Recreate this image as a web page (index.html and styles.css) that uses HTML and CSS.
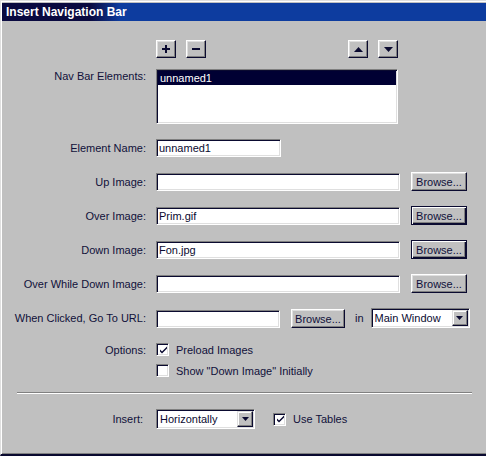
FILE: index.html
```html
<!DOCTYPE html>
<html>
<head>
  <title>Insert Navigation Bar</title>
  <link rel="stylesheet" href="styles.css">
</head>
<body>
  <div class="window">
    <div class="titlebar">Insert Navigation Bar</div>

    <div class="toolbar">
      <div class="tool-group">
        <button class="btn tool" title="Add">
          <svg width="8" height="8" viewBox="0 0 8 8"><path d="M3 0h2v3h3v2H5v3H3V5H0V3h3z" fill="#0a0a30"/></svg>
        </button>
        <button class="btn tool" title="Remove">
          <svg width="8" height="2" viewBox="0 0 8 2"><rect width="8" height="2" fill="#0a0a30"/></svg>
        </button>
      </div>
      <div class="tool-group">
        <button class="btn tool" title="Move up">
          <svg width="9" height="5" viewBox="0 0 9 5"><path d="M4.5 0L9 5H0z" fill="#0a0a30"/></svg>
        </button>
        <button class="btn tool" title="Move down">
          <svg width="9" height="5" viewBox="0 0 9 5"><path d="M0 0h9L4.5 5z" fill="#0a0a30"/></svg>
        </button>
      </div>
    </div>

    <div class="form">
      <label class="label top">Nav Bar Elements:</label>
      <div class="listbox sunken">
        <div class="list-item selected">unnamed1</div>
      </div>

      <label class="label" for="element-name">Element Name:</label>
      <div class="row">
        <input class="text short sunken" id="element-name" type="text" value="unnamed1">
      </div>

      <label class="label" for="up-image">Up Image:</label>
      <div class="row">
        <input class="text wide sunken" id="up-image" type="text" value="">
        <button class="btn browse">Browse...</button>
      </div>

      <label class="label" for="over-image">Over Image:</label>
      <div class="row">
        <input class="text wide sunken" id="over-image" type="text" value="Prim.gif">
        <button class="btn browse default">Browse...</button>
      </div>

      <label class="label" for="down-image">Down Image:</label>
      <div class="row">
        <input class="text wide sunken" id="down-image" type="text" value="Fon.jpg">
        <button class="btn browse default">Browse...</button>
      </div>

      <label class="label" for="over-down-image">Over While Down Image:</label>
      <div class="row">
        <input class="text wide sunken" id="over-down-image" type="text" value="">
        <button class="btn browse">Browse...</button>
      </div>

      <label class="label" for="goto-url">When Clicked, Go To URL:</label>
      <div class="row">
        <input class="text url sunken" id="goto-url" type="text" value="">
        <button class="btn browse small">Browse...</button>
        <span class="in-text">in</span>
        <div class="dropdown sunken">
          <span>Main Window</span>
          <span class="drop-btn"><svg width="7" height="4" viewBox="0 0 7 4"><path d="M0 0h7L3.5 4z" fill="#0a0a30"/></svg></span>
        </div>
      </div>

      <label class="label top options-label">Options:</label>
      <div class="options">
        <div class="check-line">
          <span class="checkbox sunken checked"><svg width="9" height="9" viewBox="0 0 9 9"><path d="M1 3.5l2 2 5-5v2l-5 5-2-2z" fill="#0a0a30"/></svg></span>
          <span>Preload Images</span>
        </div>
        <div class="check-line">
          <span class="checkbox sunken"></span>
          <span>Show "Down Image" Initially</span>
        </div>
      </div>
    </div>

    <div class="separator"></div>

    <div class="insert-row">
      <label class="label">Insert:</label>
      <div class="dropdown sunken">
        <span>Horizontally</span>
        <span class="drop-btn"><svg width="7" height="4" viewBox="0 0 7 4"><path d="M0 0h7L3.5 4z" fill="#0a0a30"/></svg></span>
      </div>
      <div class="check-line tables">
        <span class="checkbox sunken checked"><svg width="9" height="9" viewBox="0 0 9 9"><path d="M1 3.5l2 2 5-5v2l-5 5-2-2z" fill="#0a0a30"/></svg></span>
        <span>Use Tables</span>
      </div>
    </div>
  </div>
</body>
</html>
```

FILE: styles.css
```css
body {
  margin: 0;
  font-family: "Liberation Sans", Arial, sans-serif;
  font-size: 11px;
  color: #10103a;
}

.window {
  width: 486px;
  height: 456px;
  box-sizing: border-box;
  background-color: #c0c0c0;
  border-top: 1px solid #dfdfdf;
  border-left: 1px solid #dfdfdf;
  border-bottom: 2px solid #0a0a30;
  padding: 2px 0 0 1px;
  box-shadow: inset 1px 1px 0 #fff, inset 0 -1px 0 #808080;
}

.titlebar {
  height: 18px;
  line-height: 18px;
  padding-left: 4px;
  color: #fff;
  font-weight: bold;
  font-size: 12px;
  background: linear-gradient(to right, #0a0a40 0, #0a0a40 88px, #0d3c9f 118px, #0d3c9f 100%);
}

/* bevels */
.sunken {
  border: 1px solid;
  border-color: #808080 #fff #fff #808080;
  box-shadow: inset 1px 1px 0 #0a0a30, inset -1px -1px 0 #dfdfdf;
  background-color: #fff;
}

.btn {
  box-sizing: border-box;
  margin: 0;
  padding: 0;
  font: inherit;
  color: #10103a;
  background-color: #c0c0c0;
  border: 1px solid;
  border-color: #fff #0a0a30 #0a0a30 #fff;
  box-shadow: inset -1px -1px 0 #808080, inset 1px 1px 0 #dfdfdf;
  display: flex;
  align-items: center;
  justify-content: center;
}

.btn.default {
  border-color: #0a0a30;
  box-shadow: inset 1px 1px 0 #fff, inset -1px -1px 0 #0a0a30, inset -2px -2px 0 #808080;
}

/* toolbar above the list */
.toolbar {
  display: flex;
  justify-content: space-between;
  width: 242px;
  margin: 19px 0 0 154px;
}

.tool-group {
  display: flex;
  gap: 10px;
}

.tool {
  width: 20px;
  height: 18px;
}

/* form grid */
.form {
  display: grid;
  grid-template-columns: 144px 1fr;
  column-gap: 10px;
  row-gap: 15px;
  margin-top: 11px;
  align-items: center;
}

.label {
  text-align: right;
  white-space: nowrap;
}

.label.top {
  align-self: start;
  padding-top: 1px;
}

.options-label {
  line-height: 13px;
}

.listbox {
  width: 242px;
  height: 55px;
  box-sizing: border-box;
}

.list-item {
  height: 14px;
  line-height: 14px;
  padding-left: 2px;
  margin: 1px 1px 0 1px;
}

.list-item.selected {
  background-color: #000033;
  color: #fff;
}

.row {
  display: flex;
  align-items: flex-end;
  gap: 11px;
}

.text {
  height: 18px;
  box-sizing: border-box;
  margin: 0;
  padding: 0 2px;
  font: inherit;
  color: #0a0a30;
  outline: none;
}

.text.short {
  width: 125px;
}

.text.wide {
  width: 244px;
}

.text.url {
  width: 124px;
}

.browse {
  width: 56px;
  height: 19px;
}

.browse.small {
  width: 54px;
}

.in-text {
  margin-left: -1px;
  align-self: center;
}

.dropdown {
  width: 99px;
  height: 20px;
  box-sizing: border-box;
  display: flex;
  align-items: center;
  justify-content: space-between;
  padding: 0 1px 0 3px;
  color: #0a0a30;
}

.row .dropdown {
  margin-left: -4px;
}

.drop-btn {
  width: 16px;
  height: 16px;
  box-sizing: border-box;
  background-color: #c0c0c0;
  border: 1px solid;
  border-color: #dfdfdf #0a0a30 #0a0a30 #dfdfdf;
  box-shadow: inset -1px -1px 0 #808080, inset 1px 1px 0 #fff;
  display: flex;
  align-items: center;
  justify-content: center;
}

/* options */
.options {
  display: flex;
  flex-direction: column;
  gap: 8px;
}

.check-line {
  display: flex;
  align-items: center;
  gap: 7px;
  height: 13px;
}

.checkbox {
  width: 13px;
  height: 13px;
  box-sizing: border-box;
  display: flex;
  align-items: center;
  justify-content: center;
  padding: 1px 0 0 1px;
}

.separator {
  width: 455px;
  height: 1px;
  margin: 15px 0 0 15px;
  background-color: #808080;
  border-bottom: 1px solid #fff;
}

.insert-row {
  display: flex;
  align-items: center;
  margin-top: 15px;
}

.insert-row .label {
  width: 141px;
  margin-right: 13px;
}

.check-line.tables {
  margin-left: 18px;
}
```
